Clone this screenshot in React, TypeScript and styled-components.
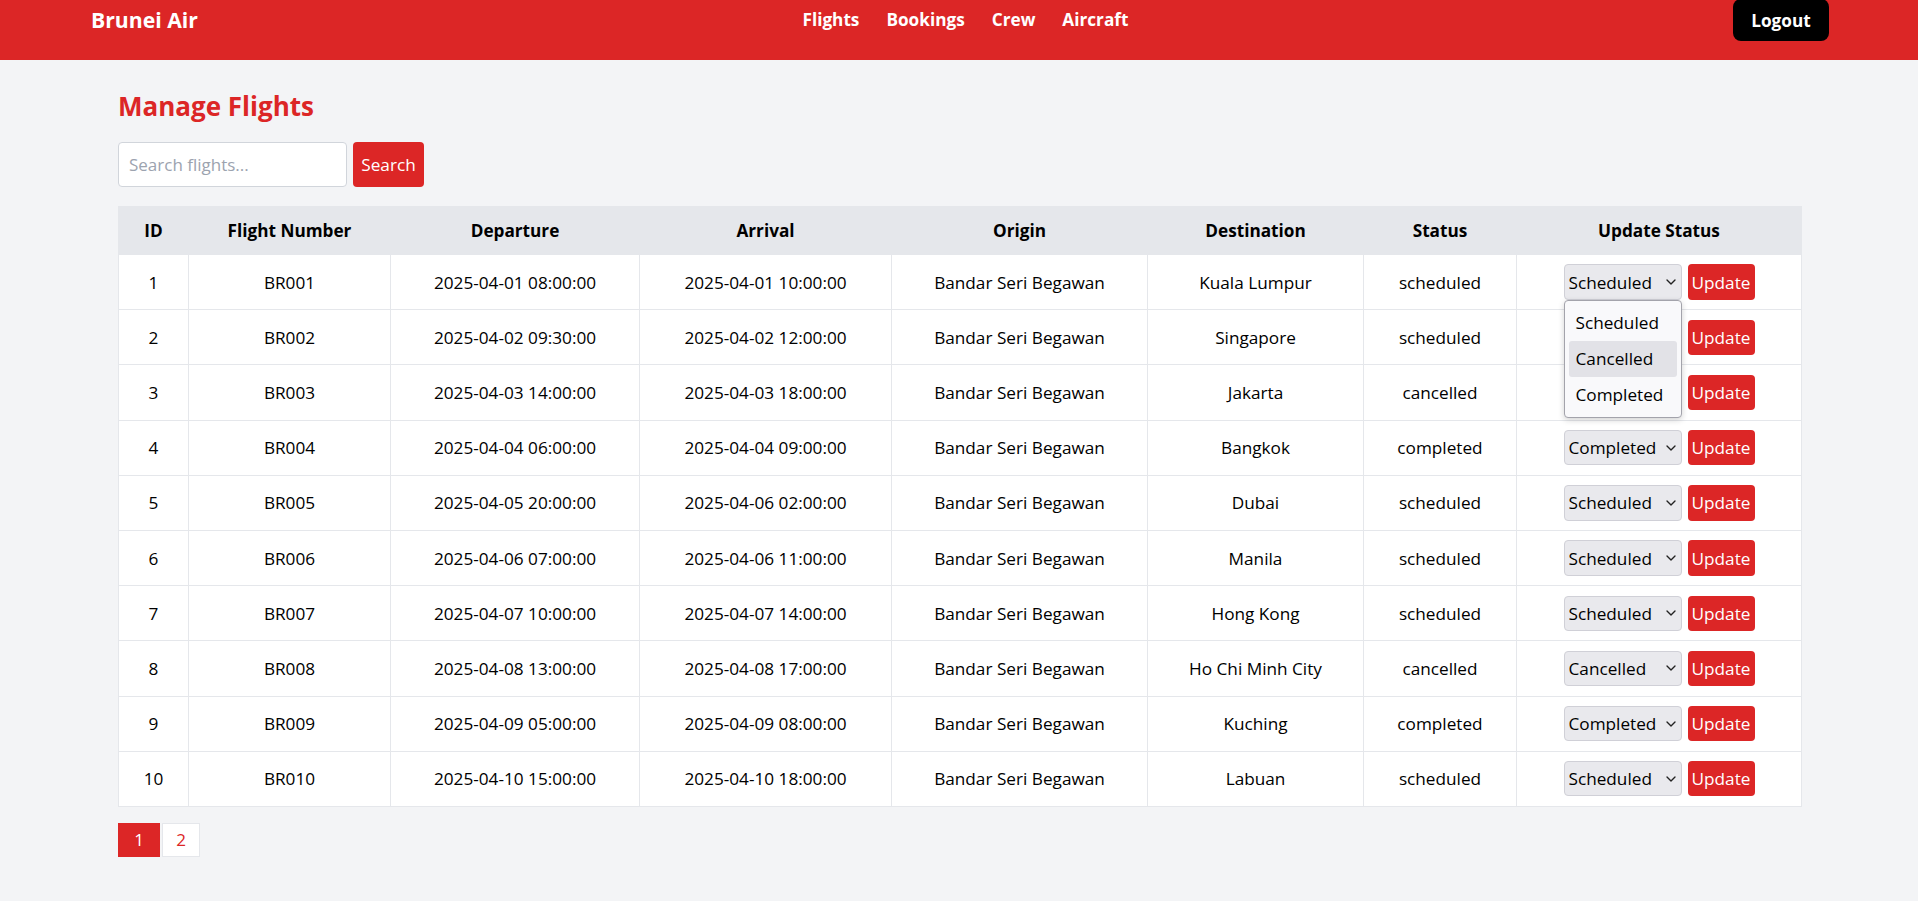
import React, { useState } from "react";
import styled, { createGlobalStyle } from "styled-components";
import { ChevronDown } from "lucide-react";

const GlobalStyle = createGlobalStyle`
  html, body { margin: 0; padding: 0; }
  body {
    background: #f3f4f6;
    font-family: "Open Sans", "Noto Sans", Arial, sans-serif;
    color: #000;
  }
  * { box-sizing: border-box; }
`;

const RED = "#dc2626";

const Header = styled.header`
  height: 60px;
  background: ${RED};
  display: flex;
  align-items: center;
  justify-content: space-between;
  padding: 0 89px 21px 91px;
`;

const Brand = styled.div`
  color: #fff;
  font-weight: 700;
  font-size: 21.2px;
`;

const Nav = styled.nav`
  display: flex;
  gap: 27px;
`;

const NavLink = styled.a`
  color: #fff;
  font-weight: 700;
  font-size: 17.2px;
  text-decoration: none;
  cursor: pointer;
`;

const LogoutButton = styled.button`
  flex: none;
  width: 96px;
  height: 42px;
  margin-top: 1px;
  background: #000;
  color: #fff;
  border: none;
  border-radius: 8px;
  font-family: inherit;
  font-weight: 700;
  font-size: 17.2px;
  cursor: pointer;
`;

const Main = styled.main`
  padding: 30px 117px 0 118px;
`;

const Title = styled.h1`
  margin: 0 0 19px;
  font-size: 26px;
  line-height: 33px;
  font-weight: 700;
  color: ${RED};
`;

const SearchRow = styled.div`
  display: flex;
  gap: 6px;
  margin-bottom: 19px;
`;

const SearchInput = styled.input`
  width: 229px;
  height: 45px;
  border: 1px solid #d1d5db;
  border-radius: 4px;
  background: #fff;
  padding: 0 10px;
  font-family: inherit;
  font-size: 17px;
  outline: none;
  &::placeholder { color: #9ca3af; }
`;

const RedButton = styled.button<{ $w: number; $h: number }>`
  width: ${(p) => p.$w}px;
  height: ${(p) => p.$h}px;
  background: ${RED};
  color: #fff;
  border: none;
  border-radius: 4px;
  padding: 0;
  font-family: inherit;
  font-size: 17.2px;
  cursor: pointer;
`;

const Table = styled.table`
  width: 100%;
  border-collapse: collapse;
  table-layout: fixed;
  background: #fff;
`;

const Th = styled.th`
  height: 48px;
  padding: 0;
  background: #e5e7eb;
  border: 1px solid #e5e7eb;
  font-weight: 700;
  font-size: 17.2px;
  text-align: center;
`;

const Td = styled.td`
  height: 55.2px;
  padding: 0;
  border: 1px solid #e5e7eb;
  font-size: 17.2px;
  text-align: center;
`;

const UpdateGroup = styled.div`
  display: inline-flex;
  align-items: center;
  gap: 6px;
  vertical-align: middle;
`;

const SelectWrap = styled.div`
  position: relative;
  width: 118px;
  height: 35.4px;
`;

const Select = styled.select`
  appearance: none;
  -webkit-appearance: none;
  width: 100%;
  height: 100%;
  background: #e9e9ed;
  border: 1px solid #d0d0d7;
  border-radius: 4px;
  padding: 0 0 0 4px;
  font-family: inherit;
  font-size: 17.2px;
  color: #000;
  outline: none;
`;

const Chevron = styled(ChevronDown)`
  position: absolute;
  right: 3px;
  top: 50%;
  transform: translateY(-50%);
  pointer-events: none;
  color: #222;
`;

const Dropdown = styled.div`
  position: absolute;
  top: 100%;
  left: 0;
  width: 118px;
  padding: 4px;
  background: #f9f9fb;
  border: 1px solid #a3a3ab;
  border-radius: 4px;
  box-shadow: 0 2px 6px rgba(0, 0, 0, 0.18);
  z-index: 10;
`;

const Option = styled.div<{ $active?: boolean }>`
  height: 36px;
  line-height: 36px;
  padding-left: 7px;
  text-align: left;
  font-size: 17.2px;
  border-radius: 3px;
  background: ${(p) => (p.$active ? "#e2e2e7" : "transparent")};
`;

const Pagination = styled.div`
  display: flex;
  gap: 2px;
  margin-top: 16px;
`;

const PageButton = styled.button<{ $active?: boolean }>`
  height: 34px;
  width: ${(p) => (p.$active ? 42 : 38)}px;
  padding: 0;
  font-family: inherit;
  font-size: 17px;
  border: 1px solid ${(p) => (p.$active ? RED : "#e5e7eb")};
  background: ${(p) => (p.$active ? RED : "#fff")};
  color: ${(p) => (p.$active ? "#fff" : RED)};
  cursor: pointer;
`;

type Flight = {
  id: number;
  num: string;
  dep: string;
  arr: string;
  dest: string;
  status: string;
};

const flights: Flight[] = [
  { id: 1, num: "BR001", dep: "2025-04-01 08:00:00", arr: "2025-04-01 10:00:00", dest: "Kuala Lumpur", status: "scheduled" },
  { id: 2, num: "BR002", dep: "2025-04-02 09:30:00", arr: "2025-04-02 12:00:00", dest: "Singapore", status: "scheduled" },
  { id: 3, num: "BR003", dep: "2025-04-03 14:00:00", arr: "2025-04-03 18:00:00", dest: "Jakarta", status: "cancelled" },
  { id: 4, num: "BR004", dep: "2025-04-04 06:00:00", arr: "2025-04-04 09:00:00", dest: "Bangkok", status: "completed" },
  { id: 5, num: "BR005", dep: "2025-04-05 20:00:00", arr: "2025-04-06 02:00:00", dest: "Dubai", status: "scheduled" },
  { id: 6, num: "BR006", dep: "2025-04-06 07:00:00", arr: "2025-04-06 11:00:00", dest: "Manila", status: "scheduled" },
  { id: 7, num: "BR007", dep: "2025-04-07 10:00:00", arr: "2025-04-07 14:00:00", dest: "Hong Kong", status: "scheduled" },
  { id: 8, num: "BR008", dep: "2025-04-08 13:00:00", arr: "2025-04-08 17:00:00", dest: "Ho Chi Minh City", status: "cancelled" },
  { id: 9, num: "BR009", dep: "2025-04-09 05:00:00", arr: "2025-04-09 08:00:00", dest: "Kuching", status: "completed" },
  { id: 10, num: "BR010", dep: "2025-04-10 15:00:00", arr: "2025-04-10 18:00:00", dest: "Labuan", status: "scheduled" },
];

const colWidths = [70, 202, 249, 252, 256, 216, 153, 285];
const headers = ["ID", "Flight Number", "Departure", "Arrival", "Origin", "Destination", "Status", "Update Status"];
const options = ["Scheduled", "Cancelled", "Completed"];
const cap = (s: string) => s.charAt(0).toUpperCase() + s.slice(1);

function StatusSelect({ initial, open }: { initial: string; open?: boolean }) {
  const [value, setValue] = useState(cap(initial));
  return (
    <SelectWrap>
      <Select value={value} onChange={(e) => setValue(e.target.value)}>
        {options.map((o) => (
          <option key={o} value={o}>
            {o}
          </option>
        ))}
      </Select>
      <Chevron size={16} strokeWidth={2} />
      {open && (
        <Dropdown>
          {options.map((o) => (
            <Option key={o} $active={o === "Cancelled"}>
              {o}
            </Option>
          ))}
        </Dropdown>
      )}
    </SelectWrap>
  );
}

export default function App() {
  return (
    <>
      <GlobalStyle />
      <Header>
        <Brand>Brunei Air</Brand>
        <Nav>
          <NavLink>Flights</NavLink>
          <NavLink>Bookings</NavLink>
          <NavLink>Crew</NavLink>
          <NavLink>Aircraft</NavLink>
        </Nav>
        <LogoutButton>Logout</LogoutButton>
      </Header>
      <Main>
        <Title>Manage Flights</Title>
        <SearchRow>
          <SearchInput placeholder="Search flights..." />
          <RedButton $w={71} $h={45}>Search</RedButton>
        </SearchRow>
        <Table>
          <colgroup>
            {colWidths.map((w, i) => (
              <col key={i} style={{ width: w }} />
            ))}
          </colgroup>
          <thead>
            <tr>
              {headers.map((h) => (
                <Th key={h}>{h}</Th>
              ))}
            </tr>
          </thead>
          <tbody>
            {flights.map((f) => (
              <tr key={f.id}>
                <Td>{f.id}</Td>
                <Td>{f.num}</Td>
                <Td>{f.dep}</Td>
                <Td>{f.arr}</Td>
                <Td>Bandar Seri Begawan</Td>
                <Td>{f.dest}</Td>
                <Td>{f.status}</Td>
                <Td>
                  <UpdateGroup>
                    <StatusSelect initial={f.status} open={f.id === 1} />
                    <RedButton $w={67} $h={35.4}>Update</RedButton>
                  </UpdateGroup>
                </Td>
              </tr>
            ))}
          </tbody>
        </Table>
        <Pagination>
          <PageButton $active>1</PageButton>
          <PageButton>2</PageButton>
        </Pagination>
      </Main>
    </>
  );
}
